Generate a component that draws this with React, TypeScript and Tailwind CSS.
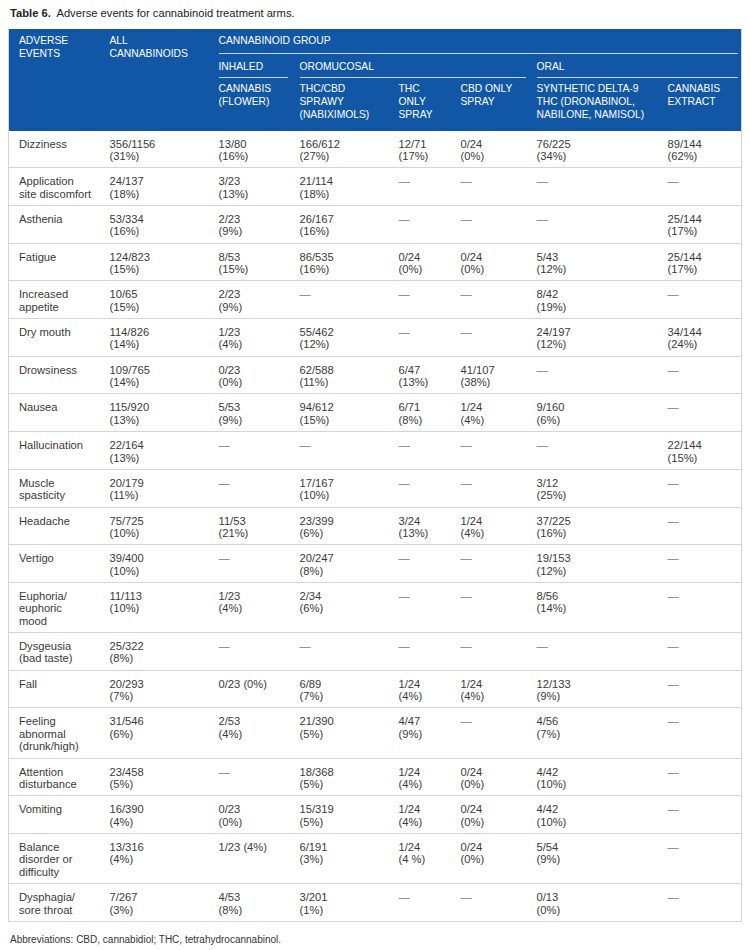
import React from "react";

const D = "—";

type Row = { name: string; cells: string[] };

const rows: Row[] = [
  { name: "Dizziness", cells: ["356/1156\n(31%)", "13/80\n(16%)", "166/612\n(27%)", "12/71\n(17%)", "0/24\n(0%)", "76/225\n(34%)", "89/144\n(62%)"] },
  { name: "Application\nsite discomfort", cells: ["24/137\n(18%)", "3/23\n(13%)", "21/114\n(18%)", D, D, D, D] },
  { name: "Asthenia", cells: ["53/334\n(16%)", "2/23\n(9%)", "26/167\n(16%)", D, D, D, "25/144\n(17%)"] },
  { name: "Fatigue", cells: ["124/823\n(15%)", "8/53\n(15%)", "86/535\n(16%)", "0/24\n(0%)", "0/24\n(0%)", "5/43\n(12%)", "25/144\n(17%)"] },
  { name: "Increased\nappetite", cells: ["10/65\n(15%)", "2/23\n(9%)", D, D, D, "8/42\n(19%)", D] },
  { name: "Dry mouth", cells: ["114/826\n(14%)", "1/23\n(4%)", "55/462\n(12%)", D, D, "24/197\n(12%)", "34/144\n(24%)"] },
  { name: "Drowsiness", cells: ["109/765\n(14%)", "0/23\n(0%)", "62/588\n(11%)", "6/47\n(13%)", "41/107\n(38%)", D, D] },
  { name: "Nausea", cells: ["115/920\n(13%)", "5/53\n(9%)", "94/612\n(15%)", "6/71\n(8%)", "1/24\n(4%)", "9/160\n(6%)", D] },
  { name: "Hallucination", cells: ["22/164\n(13%)", D, D, D, D, D, "22/144\n(15%)"] },
  { name: "Muscle\nspasticity", cells: ["20/179\n(11%)", D, "17/167\n(10%)", D, D, "3/12\n(25%)", D] },
  { name: "Headache", cells: ["75/725\n(10%)", "11/53\n(21%)", "23/399\n(6%)", "3/24\n(13%)", "1/24\n(4%)", "37/225\n(16%)", D] },
  { name: "Vertigo", cells: ["39/400\n(10%)", D, "20/247\n(8%)", D, D, "19/153\n(12%)", D] },
  { name: "Euphoria/\neuphoric\nmood", cells: ["11/113\n(10%)", "1/23\n(4%)", "2/34\n(6%)", D, D, "8/56\n(14%)", D] },
  { name: "Dysgeusia\n(bad taste)", cells: ["25/322\n(8%)", D, D, D, D, D, D] },
  { name: "Fall", cells: ["20/293\n(7%)", "0/23 (0%)", "6/89\n(7%)", "1/24\n(4%)", "1/24\n(4%)", "12/133\n(9%)", D] },
  { name: "Feeling\nabnormal\n(drunk/high)", cells: ["31/546\n(6%)", "2/53\n(4%)", "21/390\n(5%)", "4/47\n(9%)", D, "4/56\n(7%)", D] },
  { name: "Attention\ndisturbance", cells: ["23/458\n(5%)", D, "18/368\n(5%)", "1/24\n(4%)", "0/24\n(0%)", "4/42\n(10%)", D] },
  { name: "Vomiting", cells: ["16/390\n(4%)", "0/23\n(0%)", "15/319\n(5%)", "1/24\n(4%)", "0/24\n(0%)", "4/42\n(10%)", D] },
  { name: "Balance\ndisorder or\ndifficulty", cells: ["13/316\n(4%)", "1/23 (4%)", "6/191\n(3%)", "1/24\n(4 %)", "0/24\n(0%)", "5/54\n(9%)", D] },
  { name: "Dysphagia/\nsore throat", cells: ["7/267\n(3%)", "4/53\n(8%)", "3/201\n(1%)", D, D, "0/13\n(0%)", D] },
];

function Lines({ text }: { text: string }) {
  const parts = text.split("\n");
  return (
    <>
      {parts.map((p, i) => (
        <React.Fragment key={i}>
          {i > 0 && <br />}
          {p}
        </React.Fragment>
      ))}
    </>
  );
}

const widths = [91, 109, 81, 99, 62, 76, 131, 84];

export default function App() {
  return (
    <div
      className="bg-white w-[750px] min-h-[950px] text-[#333333]"
      style={{ fontFamily: '"Liberation Sans", Arial, Helvetica, sans-serif' }}
    >
      <div className="ml-[8px] w-[733px] pt-[6px]">
        <div className="pl-[2px] text-[11.2px] leading-[14px] text-[#222222]">
          <span className="font-bold">Table 6.</span>
          <span>{"\u00a0 "}Adverse events for cannabinoid treatment arms.</span>
        </div>
        <table className="mt-[9px] w-[733px] table-fixed border-collapse border-x border-b border-[#d5d5d5]">
          <colgroup>
            {widths.map((w, i) => (
              <col key={i} style={{ width: w }} />
            ))}
          </colgroup>
          <thead className="bg-[#1157a5] text-white text-[10.3px] leading-[12.7px] font-normal">
            <tr>
              <th rowSpan={3} className="align-top text-left font-normal pl-[10px] pt-[6px]">
                ADVERSE
                <br />
                EVENTS
              </th>
              <th rowSpan={3} className="align-top text-left font-normal pl-[10px] pt-[6px]">
                ALL
                <br />
                CANNABINOIDS
              </th>
              <th colSpan={6} className="align-top text-left font-normal pl-[10px] pr-[3px] pt-[6px]">
                <div className="pb-[5px] border-b border-white/75">CANNABINOID GROUP</div>
              </th>
            </tr>
            <tr>
              <th className="align-top text-left font-normal pl-[10px] pr-[2px] pt-[7px]">
                <div className="pb-[4px] border-b border-white/75">INHALED</div>
              </th>
              <th colSpan={3} className="align-top text-left font-normal pl-[10px] pr-[1px] pt-[7px]">
                <div className="pb-[4px] border-b border-white/75">OROMUCOSAL</div>
              </th>
              <th colSpan={2} className="align-top text-left font-normal pl-[10px] pr-[3px] pt-[7px]">
                <div className="pb-[4px] border-b border-white/75">ORAL</div>
              </th>
            </tr>
            <tr>
              <th className="align-top text-left font-normal pl-[10px] pt-[5px] pb-[9px]">
                CANNABIS
                <br />
                (FLOWER)
              </th>
              <th className="align-top text-left font-normal pl-[10px] pt-[5px] pb-[9px]">
                THC/CBD
                <br />
                SPRAWY
                <br />
                (NABIXIMOLS)
              </th>
              <th className="align-top text-left font-normal pl-[10px] pt-[5px] pb-[9px]">
                THC
                <br />
                ONLY
                <br />
                SPRAY
              </th>
              <th className="align-top text-left font-normal pl-[10px] pt-[5px] pb-[9px]">
                CBD ONLY
                <br />
                SPRAY
              </th>
              <th className="align-top text-left font-normal pl-[10px] pt-[5px] pb-[9px] whitespace-nowrap">
                SYNTHETIC DELTA-9
                <br />
                THC (DRONABINOL,
                <br />
                NABILONE, NAMISOL)
              </th>
              <th className="align-top text-left font-normal pl-[10px] pt-[5px] pb-[9px]">
                CANNABIS
                <br />
                EXTRACT
              </th>
            </tr>
          </thead>
          <tbody className="text-[11.2px] leading-[12.4px] text-[#3a3a3a]">
            {rows.map((r, ri) => (
              <tr key={ri} className={ri < rows.length - 1 ? "border-b border-[#d5d5d5]" : ""}>
                <td className="align-top pl-[10px] pt-[7px] pb-[4.9px] whitespace-nowrap">
                  <Lines text={r.name} />
                </td>
                {r.cells.map((c, ci) => (
                  <td
                    key={ci}
                    className={
                      "align-top pl-[10px] pt-[7px] pb-[4.9px] whitespace-nowrap " +
                      (c === D ? "text-[#7a7a7a]" : "")
                    }
                  >
                    <Lines text={c} />
                  </td>
                ))}
              </tr>
            ))}
          </tbody>
        </table>
        <div className="pl-[2px] mt-[11px] text-[10px] leading-[13px] text-[#333333]">
          Abbreviations: CBD, cannabidiol; THC, tetrahydrocannabinol.
        </div>
      </div>
    </div>
  );
}
